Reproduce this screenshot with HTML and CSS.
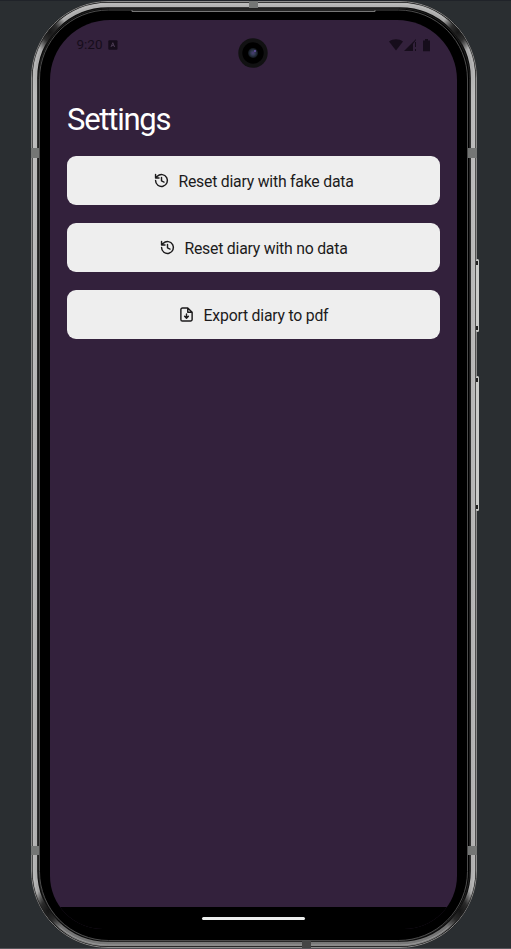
FILE: index.html
```html
<!DOCTYPE html>
<html lang="en">
<head>
<meta charset="utf-8">
<title>Settings</title>
<link rel="stylesheet" href="styles.css">
</head>
<body>
<main class="device">
  <svg class="frame" viewBox="0 0 511 949" aria-hidden="true">
    <defs>
      <linearGradient id="metal" x1="0" y1="0" x2="0" y2="949" gradientUnits="userSpaceOnUse">
        <stop offset="0" stop-color="#b9b9b9"/><stop offset=".03" stop-color="#a0a0a0"/><stop offset=".1" stop-color="#bababa"/>
        <stop offset=".93" stop-color="#b0b0b0"/><stop offset=".97" stop-color="#707070"/><stop offset="1" stop-color="#7b7b7b"/>
      </linearGradient>
      <radialGradient id="shade"><stop offset="0" stop-color="#151515"/><stop offset=".45" stop-color="#202020" stop-opacity=".9"/><stop offset="1" stop-color="#222" stop-opacity="0"/></radialGradient>
      <radialGradient id="lens"><stop offset="0" stop-color="#4b3d78"/><stop offset=".45" stop-color="#303850"/><stop offset="1" stop-color="#10151a"/></radialGradient>
      <mask id="band"><rect x="34.8" y="5" width="438.4" height="939" rx="73" fill="none" stroke="#fff" stroke-width="6"/></mask>
    </defs>
    <rect width="511" height="1" fill="#202329"/>
    <rect y="948" width="511" height="1" fill="#55555a"/>
    <rect x="31" y="1" width="446" height="947" rx="77" fill="#0c0c0c"/>
    <rect x="31.5" y="1.5" width="445" height="946" rx="76.5" fill="none" stroke="#8b8b8b"/>
    <rect x="34.9" y="5" width="438.2" height="939" rx="73" fill="none" stroke="url(#metal)" stroke-width="4.6"/>
    <rect x="33.8" y="4" width="440.4" height="941" rx="74" fill="none" stroke="#d0d0d0" stroke-opacity=".35"/>
    <g mask="url(#band)" fill="url(#shade)">
      <ellipse cx="50" cy="32" rx="17" ry="21"/><ellipse cx="458" cy="32" rx="17" ry="21"/>
      <ellipse cx="48" cy="911" rx="17" ry="24"/><ellipse cx="460" cy="911" rx="17" ry="24"/>
    </g>
    <rect x="38.5" y="8.5" width="431" height="932" rx="70" fill="#000" stroke="#202020"/>
    <rect x="39.5" y="10" width="428" height="930.5" rx="69" fill="#000" stroke="#555" stroke-width=".9"/>
    <path d="M132 10v1.5H375V10" fill="none" stroke="#777"/>
    <g fill="#c9cac8"><rect x="476" y="259" width="3" height="73" rx="1.500"/><rect x="476" y="376" width="3" height="135" rx="1.500"/></g>
    <g fill="#202020"><rect x="476" y="261" width="2" height="4"/><rect x="476" y="326" width="2" height="4"/><rect x="476" y="378" width="2" height="4"/><rect x="476" y="505" width="2" height="4"/></g>
    <g fill="#747675"><rect x="31" y="148" width="8" height="10"/><rect x="468" y="148" width="9" height="10"/><rect x="31" y="846" width="8" height="9"/><rect x="468" y="846" width="9" height="9"/><rect x="249" y="1" width="9" height="7"/></g>
    <rect x="302" y="941" width="9" height="7" fill="#454545"/>
  </svg>
  <section class="screen">
    <header class="status">
      <span class="clock">9:20</span>
      <svg class="badge" viewBox="0 0 10 10"><rect x=".3" y=".3" width="9.2" height="9.5" rx="1" fill="#160d1b"/><path d="M3 7 4.8 2.7 6.6 7M3.7 5.6h2.2" fill="none" stroke="#4a3a52"/></svg>
      <svg class="signals" viewBox="0 0 42 13"><path d="M0 2.4C4-.4 10-.4 14 2.4L7 11.4Z"/><path d="M15 12 24 3v9ZM24 3l3-3v1l-3 4ZM26 3h1v5h-1ZM26 10h1v2h-1ZM34 1.5h2V0h3v1.5h2V12.3h-7Z"/></svg>
    </header>
    <div class="content">
      <h1>Settings</h1>
      <button class="action">
        <svg class="icon" viewBox="0 0 24 24"><path d="M2.500 12a9.500 9.500 0 1 0 2.800-6.700L3 7.500M2.500 2.500v5.500h5.500M12 7v5.500l4 2"/></svg>
        <span>Reset diary with fake data</span>
      </button>
      <button class="action">
        <svg class="icon" viewBox="0 0 24 24"><path d="M2.500 12a9.500 9.500 0 1 0 2.800-6.700L3 7.500M2.500 2.500v5.500h5.500M12 7v5.500l4 2"/></svg>
        <span>Reset diary with no data</span>
      </button>
      <button class="action">
        <svg class="icon" viewBox="0 0 24 24"><path d="M14 1.500H5.500A2.500 2.500 0 0 0 3 4v16a2.500 2.500 0 0 0 2.500 2.500h13A2.500 2.500 0 0 0 21 20V8.500ZM14 1.500v7h7M12 11v6.500M9 14.800l3 3 3-3"/></svg>
        <span>Export diary to pdf</span>
      </button>
    </div>
    <footer class="navigation"><span class="handle"></span></footer>
  </section>
  <svg class="camera" viewBox="0 0 30 30"><circle cx="15" cy="15" r="14.700" fill="#111112"/><circle cx="15" cy="15" r="10.700" fill="#000"/><circle cx="15" cy="15" r="5" fill="url(#lens)"/><circle cx="17" cy="13" r="1" fill="#6a50a8"/></svg>
</main>
</body>
</html>
```
FILE: styles.css
```css
* { box-sizing: border-box; }
body { margin: 0; background: #2a2e31; font-family: Roboto, sans-serif; overflow: hidden; }
.device { position: relative; width: 511px; height: 949px; padding: 20px 54px 20px 50px; }
.frame { position: absolute; inset: 0; width: 511px; height: 949px; }
.screen { position: relative; width: 407px; height: 909px; border-radius: 60px 60px 53px 53px; overflow: hidden; background: #33213c; display: flex; flex-direction: column; }
.status { height: 50px; padding: 17px 26px 0; display: flex; align-items: flex-start; color: #160d1b; }
.clock { font-size: 13.5px; line-height: 14px; padding-left: .5px; }
.badge { width: 10px; height: 10px; margin: 3px 0 0 5px; }
.signals { width: 42px; height: 13px; margin: 2px 0 0 auto; fill: #160d1b; }
.content { flex: 1; padding: 31px 17px 0; display: flex; flex-direction: column; gap: 17.6px; }
h1 { margin: 0 0 -3.6px; height: 41px; font-size: 31px; line-height: 37px; font-weight: 400; letter-spacing: -1.25px; color: #fff; }
.action { width: 373px; height: 49.3px; flex: none; border: 0; border-radius: 9px; background: #eee; color: #1c1b1c; font: 400 15.8px/20px Roboto, sans-serif; letter-spacing: -.22px; display: flex; align-items: center; justify-content: center; gap: 10px; padding: 3px 0 0; }
.icon { width: 15px; height: 15px; margin: -3px -.5px 0 .5px; fill: none; stroke: currentColor; stroke-width: 2.3; stroke-linecap: round; stroke-linejoin: round; }
.navigation { height: 22px; background: #000; display: flex; justify-content: center; padding-top: 9.5px; }
.handle { width: 103px; height: 3.500px; border-radius: 2px; background: #eceeed; }
.camera { position: absolute; left: 238px; top: 38px; width: 30px; height: 30px; }
```
